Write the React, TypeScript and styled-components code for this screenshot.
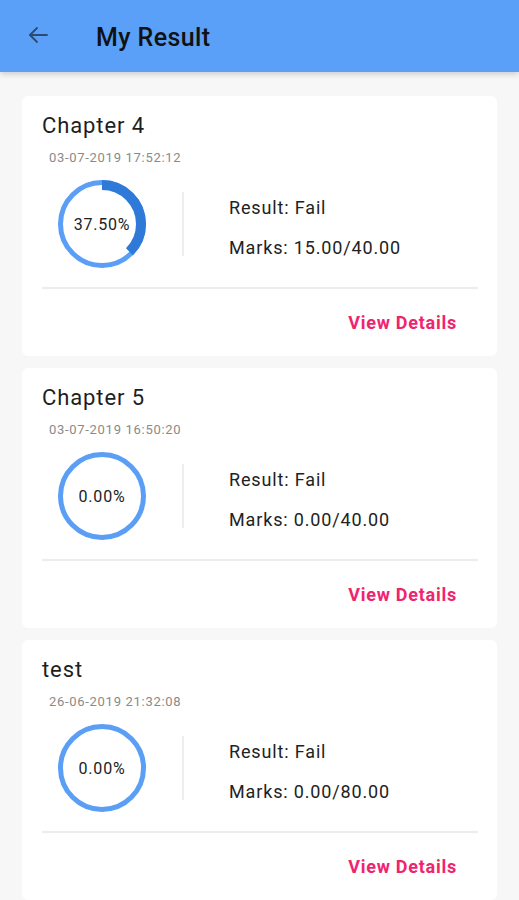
import React from "react";
import styled, { createGlobalStyle } from "styled-components";

const GlobalStyle = createGlobalStyle`
  html, body {
    margin: 0;
    padding: 0;
    background: #f7f7f7;
    font-family: "Roboto", "Liberation Sans", sans-serif;
  }
`;

type Result = {
  title: string;
  date: string;
  percent: number;
  result: string;
  marks: string;
};

const results: Result[] = [
  { title: "Chapter 4", date: "03-07-2019 17:52:12", percent: 37.5, result: "Fail", marks: "15.00/40.00" },
  { title: "Chapter 5", date: "03-07-2019 16:50:20", percent: 0, result: "Fail", marks: "0.00/40.00" },
  { title: "test", date: "26-06-2019 21:32:08", percent: 0, result: "Fail", marks: "0.00/80.00" },
];

function Ring({ percent }: { percent: number }) {
  const r = 39;
  const c = 2 * Math.PI * r;
  return (
    <SRing>
      <svg width="90" height="90" viewBox="0 0 90 90">
        <circle cx="45" cy="45" r="41.5" fill="none" stroke="#5a9ef5" strokeWidth="5" />
        {percent > 0 && (
          <circle
            cx="45"
            cy="45"
            r={r}
            fill="none"
            stroke="#2f7ad9"
            strokeWidth="10"
            strokeDasharray={`${(c * percent) / 100} ${c}`}
            transform="rotate(-90 45 45)"
          />
        )}
      </svg>
      <span>{percent.toFixed(2)}%</span>
    </SRing>
  );
}

function ResultCard({ item }: { item: Result }) {
  return (
    <SCard>
      <STitle>{item.title}</STitle>
      <SDate>{item.date}</SDate>
      <SBody>
        <Ring percent={item.percent} />
        <SDivider />
        <SInfo>
          <p>Result: {item.result}</p>
          <p>Marks: {item.marks}</p>
        </SInfo>
      </SBody>
      <SRule />
      <SFooter>
        <SLink>View Details</SLink>
      </SFooter>
    </SCard>
  );
}

export default function App() {
  return (
    <>
      <GlobalStyle />
      <SHeader>
        <SBack aria-label="back">
          <svg width="24" height="24" viewBox="0 0 24 24" fill="none" stroke="#2c4b73" strokeWidth="1.8" strokeLinecap="round" strokeLinejoin="round">
            <path d="M21 12H4" />
            <path d="M11 5l-7 7 7 7" />
          </svg>
        </SBack>
        <SHeaderTitle>My Result</SHeaderTitle>
      </SHeader>
      <SList>
        {results.map((r) => (
          <ResultCard key={r.title} item={r} />
        ))}
      </SList>
    </>
  );
}

const SHeader = styled.header`
  height: 72px;
  background: #5a9ff8;
  display: flex;
  align-items: center;
  padding: 2px 0 0 25px;
  box-sizing: border-box;
  box-shadow: 0 2px 6px rgba(0, 0, 0, 0.18);
  position: relative;
  z-index: 1;
`;

const SBack = styled.div`
  width: 26px;
  height: 26px;
  display: flex;
  align-items: center;
  justify-content: center;
  margin-top: -4px;
`;

const SHeaderTitle = styled.h1`
  margin: 0 0 0 45px;
  font-size: 25px;
  letter-spacing: 0.4px;
  font-weight: 500;
  color: #111;
  font-family: "Roboto", sans-serif;
`;

const SList = styled.main`
  display: flex;
  flex-direction: column;
  gap: 12px;
  padding: 24px 22px 0;
  height: 804px;
  overflow: hidden;
`;

const SCard = styled.section`
  flex-shrink: 0;
  height: 260px;
  box-sizing: border-box;
  background: #fff;
  border-radius: 6px;
  padding: 17px 19px 0 20px;
  display: flex;
  flex-direction: column;
`;

const STitle = styled.h2`
  margin: 0;
  font-size: 22px;
  line-height: 26px;
  letter-spacing: 0.9px;
  font-weight: 400;
  color: #1e1e1e;
`;

const SDate = styled.div`
  margin: 11px 0 0 7px;
  font-size: 13px;
  line-height: 16px;
  letter-spacing: 0.7px;
  color: #8a8a8a;
`;

const SBody = styled.div`
  margin-top: 13px;
  display: flex;
  align-items: center;
  padding-left: 15px;
  height: 90px;
`;

const SRing = styled.div`
  position: relative;
  width: 90px;
  height: 90px;
  & svg {
    display: block;
  }
  & span {
    position: absolute;
    inset: 0;
    display: flex;
    align-items: center;
    justify-content: center;
    font-size: 16px;
    letter-spacing: 0.8px;
    color: #222;
  }
`;

const SDivider = styled.div`
  width: 2px;
  height: 64px;
  background: #eeeeee;
  margin: 0 45px 0 35px;
`;

const SInfo = styled.div`
  display: flex;
  flex-direction: column;
  gap: 18px;
  padding-top: 7px;
  & p {
    margin: 0;
    font-size: 18px;
    line-height: 22px;
    letter-spacing: 0.85px;
    color: #222;
  }
`;

const SRule = styled.div`
  margin-top: 18px;
  height: 2px;
  background: #ececec;
`;

const SFooter = styled.div`
  display: flex;
  justify-content: flex-end;
  padding: 23px 21px 0 0;
`;

const SLink = styled.span`
  font-size: 18px;
  line-height: 22px;
  letter-spacing: 0.75px;
  font-weight: 700;
  color: #f0246e;
`;
